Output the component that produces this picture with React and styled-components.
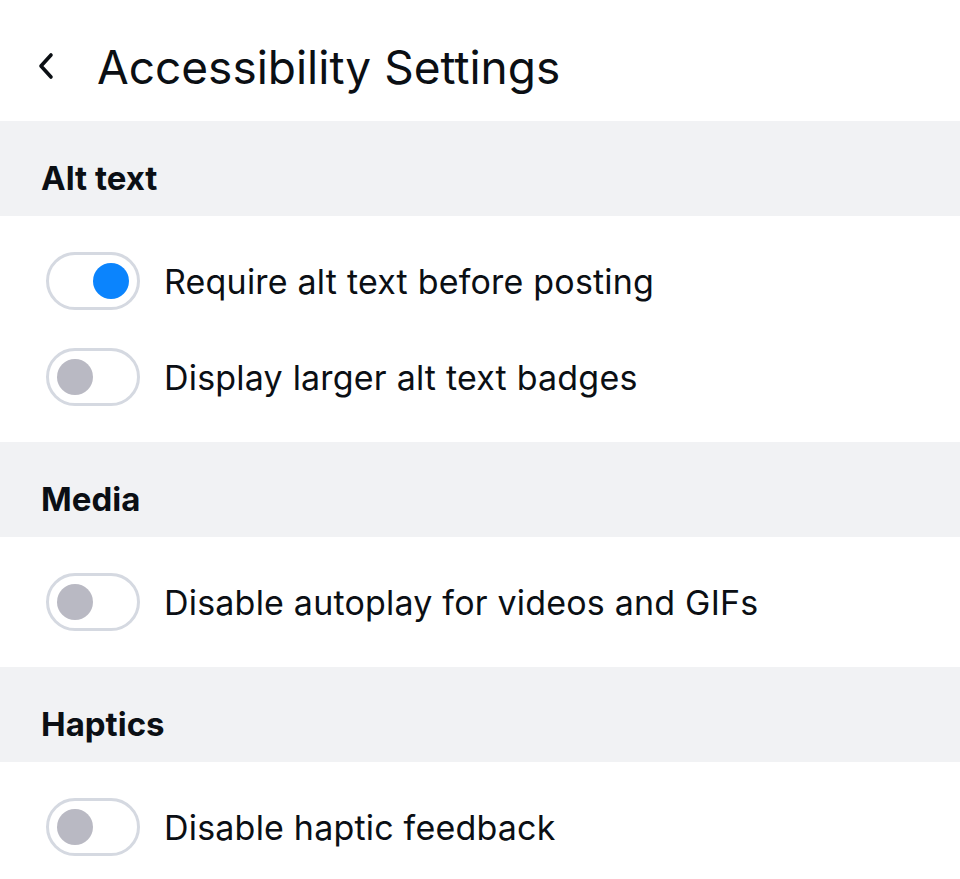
import React from 'react';
import styled, { createGlobalStyle } from 'styled-components';

const GlobalStyle = createGlobalStyle`
	body {
		margin: 0;
		background: #fff;
		font-family: Inter, "Noto Sans", sans-serif;
		color: #0b0f14;
	}
`

const sections = [
	{
		title: 'Alt text',
		items: [
			{ label: 'Require alt text before posting', on: true },
			{ label: 'Display larger alt text badges', on: false },
		],
	},
	{
		title: 'Media',
		items: [{ label: 'Disable autoplay for videos and GIFs', on: false }],
	},
	{
		title: 'Haptics',
		items: [{ label: 'Disable haptic feedback', on: false }],
	},
];

const Toggle = ({ on }) => (
	<Track role="switch" aria-checked={on}>
		<Knob on={on ? 1 : 0} />
	</Track>
);

export default function App() {
	return (
		<Page>
			<GlobalStyle />
			<Header>
				<Back aria-label="Back">
					<svg width="20" height="28" viewBox="0 0 20 28" fill="none">
						<path d="M15 3 L5 14 L15 25" stroke="#0b0f14" strokeWidth="3.6" strokeLinecap="round" strokeLinejoin="round" />
					</svg>
				</Back>
				<Title>Accessibility Settings</Title>
			</Header>
			{sections.map((s) => (
				<section key={s.title}>
					<SectionHead>{s.title}</SectionHead>
					<Rows>
						{s.items.map((it) => (
							<Row key={it.label}>
								<Toggle on={it.on} />
								<Label>{it.label}</Label>
							</Row>
						))}
					</Rows>
				</section>
			))}
		</Page>
	);
}

const Page = styled.div`
	width: 960px;
	min-height: 879px;
	background: #fff;
`

const Header = styled.header`
	height: 121px;
	display: flex;
	align-items: center;
	padding: 12px 0 0 36px;
	box-sizing: border-box;
`

const Back = styled.button`
	border: 0;
	background: none;
	padding: 0;
	width: 20px;
	height: 28px;
	margin-right: 41px;
	margin-top: -2px;
	display: flex;
`

const Title = styled.h1`
	margin: 0;
	font-size: 46px;
	font-weight: 400;
	letter-spacing: 0;
`

const SectionHead = styled.h2`
	margin: 0;
	height: 95px;
	box-sizing: border-box;
	padding: 19px 0 0 41px;
	background: #f1f2f4;
	display: flex;
	align-items: center;
	font-size: 33px;
	font-weight: 700;
`

const Rows = styled.div`
	padding: 17px 0;
	display: flex;
	flex-direction: column;
`

const Row = styled.div`
	height: 96px;
	display: flex;
	align-items: center;
	padding-left: 46px;
`

const Track = styled.div`
	width: 94px;
	height: 58px;
	box-sizing: border-box;
	border: 3px solid #d5d9e1;
	border-radius: 29px;
	background: #fff;
	display: flex;
	align-items: center;
	padding: 0 8px;
	margin-right: 24px;
`

const Knob = styled.span`
	width: 36px;
	height: 36px;
	border-radius: 50%;
	background: ${(p) => (p.on ? '#0b84fd' : '#b9b9c3')};
	margin-left: ${(p) => (p.on ? 'auto' : '0')};
`

const Label = styled.span`
	font-size: 34px;
	font-weight: 400;
	letter-spacing: 0.2px;
`
